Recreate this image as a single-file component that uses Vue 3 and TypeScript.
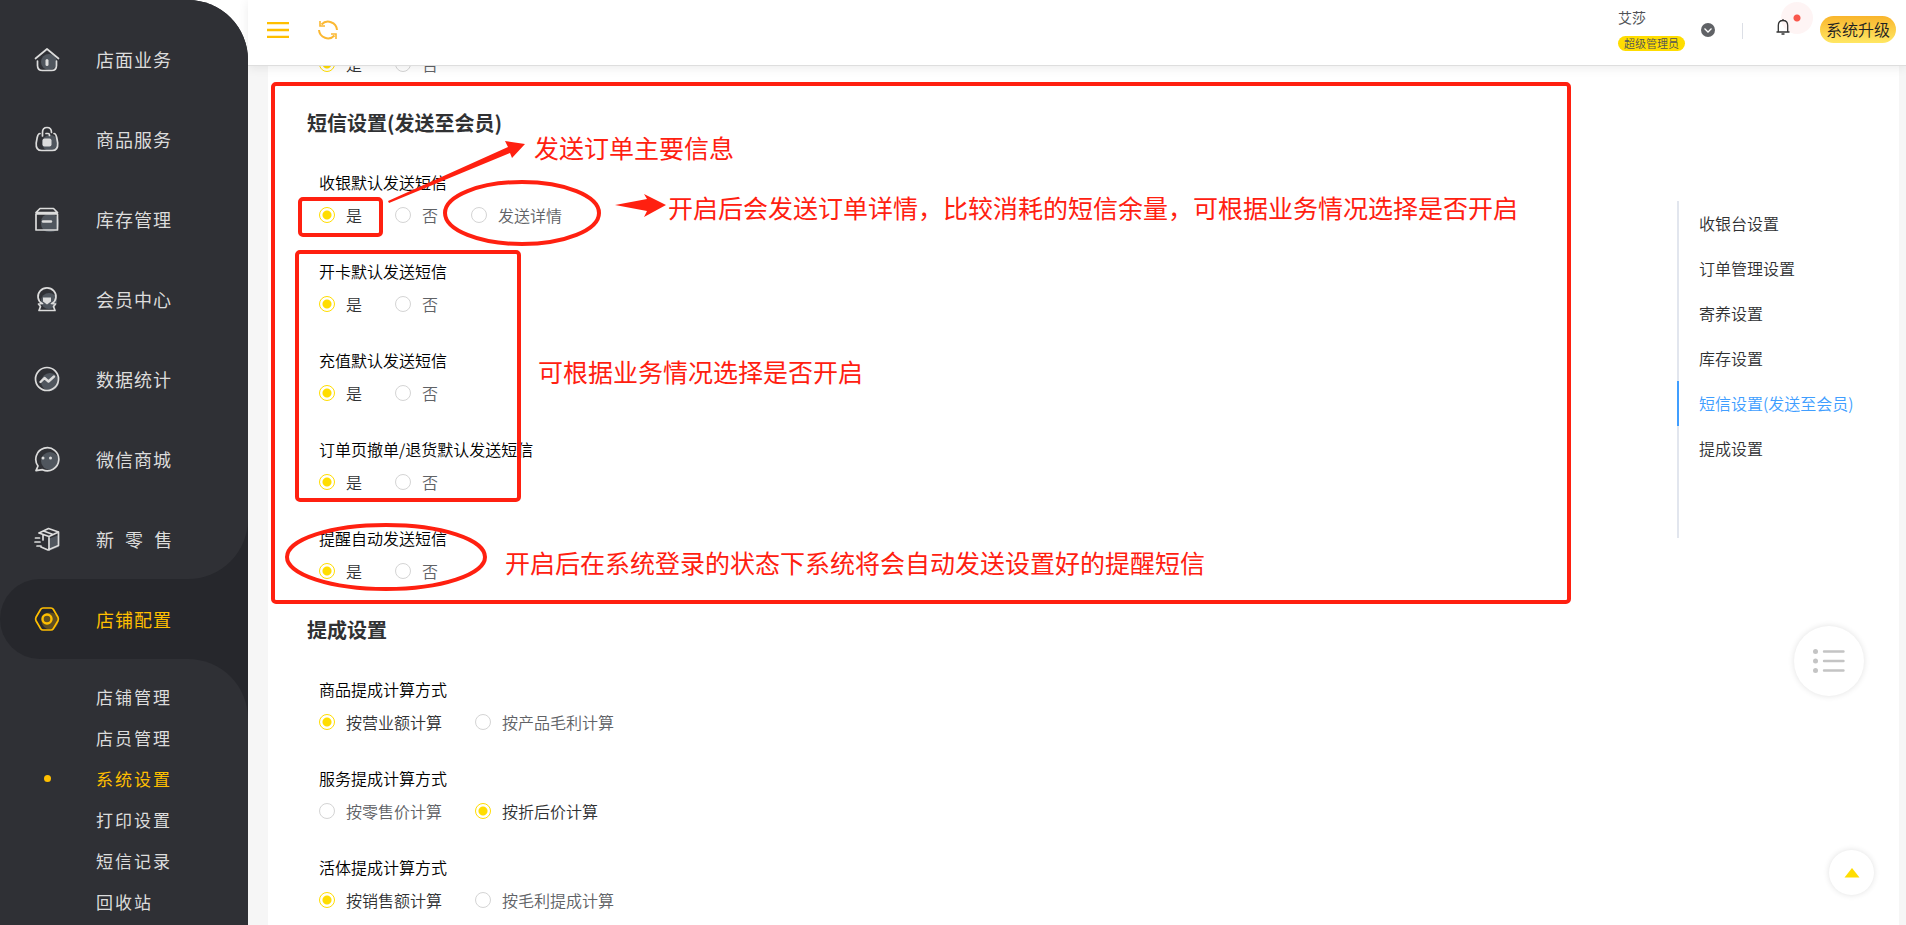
<script setup lang="ts">
import { ref } from 'vue'

interface NavItem { icon: string; label: string }
interface Choice { id: string; label: string; options: string[]; value: number }
interface Section { title: string; choices: Choice[] }

const navItems: NavItem[] = [
  { icon: 'home', label: '店面业务' },
  { icon: 'bag', label: '商品服务' },
  { icon: 'box', label: '库存管理' },
  { icon: 'member', label: '会员中心' },
  { icon: 'chart', label: '数据统计' },
  { icon: 'chat', label: '微信商城' },
  { icon: 'parcel', label: '新\u00a0\u00a0零\u00a0\u00a0售' },
]
const subItems: string[] = ['店铺管理', '店员管理', '系统设置', '打印设置', '短信记录', '回收站']
const activeSub = ref('系统设置')

const previous = ref(0)
const sections = ref<Section[]>([
  {
    title: '短信设置(发送至会员)',
    choices: [
      { id: 'cashier', label: '收银默认发送短信', options: ['是', '否', '发送详情'], value: 0 },
      { id: 'card', label: '开卡默认发送短信', options: ['是', '否'], value: 0 },
      { id: 'recharge', label: '充值默认发送短信', options: ['是', '否'], value: 0 },
      { id: 'refund', label: '订单页撤单/退货默认发送短信', options: ['是', '否'], value: 0 },
      { id: 'remind', label: '提醒自动发送短信', options: ['是', '否'], value: 0 },
    ],
  },
  {
    title: '提成设置',
    choices: [
      { id: 'goods', label: '商品提成计算方式', options: ['按营业额计算', '按产品毛利计算'], value: 0 },
      { id: 'service', label: '服务提成计算方式', options: ['按零售价计算', '按折后价计算'], value: 1 },
      { id: 'live', label: '活体提成计算方式', options: ['按销售额计算', '按毛利提成计算'], value: 0 },
    ],
  },
])

const anchors: string[] = ['收银台设置', '订单管理设置', '寄养设置', '库存设置', '短信设置(发送至会员)', '提成设置']
const activeAnchor = ref('短信设置(发送至会员)')
</script>

<template>
  <div class="layout">
    <aside class="sidebar">
      <nav class="nav-top">
        <a v-for="item in navItems" :key="item.icon" href="#" class="nav-row" @click.prevent>
          <svg class="nav-icon" viewBox="0 0 26 26" aria-hidden="true">
            <template v-if="item.icon === 'home'">
              <circle class="blob" cx="15" cy="16" r="8" />
              <path d="M1.500 12.500 L13 3 L24.500 12.500 M3.500 15 v4.500 q0 5 5 5 h9 q5 0 5-5 v-4.500" />
              <rect class="fill" x="11.500" y="13" width="3" height="7" rx="1.500" />
            </template>
            <template v-else-if="item.icon === 'bag'">
              <circle class="blob" cx="16" cy="17" r="8" />
              <path d="M8.500 10 V6.500 q0-5 4.500-5 t4.500 5 M12 7.500 h2 q1.500 0 1.500 2 M6 7.500 q-2 0-2.800 4 l-1 5.500 q-.6 7.500 5.500 7.500 h10.500 q6 0 5.500-7.500 l-1-5.500 q-.8-4-2.700-4" />
              <rect class="fill" x="8.500" y="12.500" width="9" height="8" rx="2" />
            </template>
            <template v-else-if="item.icon === 'box'">
              <rect class="blob" x="7" y="8" width="18" height="18" rx="8" />
              <path d="M2 8 h21.500 v16 h-21.500 z M2 6.500 l4-4 h13.500 l4 4 z" />
              <path class="thick" d="M9 15.500 h8" />
            </template>
            <template v-else-if="item.icon === 'member'">
              <circle class="blob" cx="15" cy="15" r="8" />
              <path d="M8 17.500 A9 8.500 0 1 1 18 17.500 M8.500 17.500 l-4 .5 l2 2.500 l-1.500 4 h16 l-1.500-4 l2-2.500 l-4-.5" />
              <path class="fill" d="M9 11.500 h8 v4 l-4 3 l-4-3 z" />
            </template>
            <template v-else-if="item.icon === 'chart'">
              <circle class="blob" cx="16" cy="16" r="9" />
              <circle cx="13" cy="13" r="11.500" />
              <path class="thick" d="M6.500 16 l4-4 l4 3.500 l5.500-5" />
            </template>
            <template v-else-if="item.icon === 'chat'">
              <circle class="blob" cx="16" cy="15" r="9" />
              <path d="M4 20 a11.500 11.500 0 1 1 4.500 3.700 l-6.500 1 z" />
              <circle class="fill" cx="9" cy="12" r="1.500" />
              <circle class="fill" cx="16.500" cy="12" r="1.500" />
            </template>
            <template v-else>
              <path class="blob" d="M14 13 l11-4 v12 l-10 4 z" />
              <path d="M5 7 l9.500-4.500 l10 3.500 v13.500 l-10.500 4.500 l-7-3 M5 7 l10 3.500 l9.500-4.500 M15 10.500 v13.500 M9.500 5 l9.500 3.500 M9 9 v5 M1.500 12 h4 M1 16 h5 M3 20 h4" />
            </template>
          </svg>
          <span>{{ item.label }}</span>
        </a>
      </nav>
      <div class="nav-active-wrap">
        <a href="#" class="nav-row nav-active" @click.prevent>
          <svg class="nav-icon" viewBox="0 0 26 26" aria-hidden="true">
            <circle class="blob" cx="16" cy="15" r="8.500" />
            <path d="M9 2 h8 q1.500 0 2.300 1.300 l4.700 8 q.8 1.700 0 3.400 l-4.700 8 q-.8 1.300-2.300 1.300 h-8 q-1.500 0-2.300-1.300 l-4.700-8 q-.8-1.700 0-3.400 l4.700-8 Q7.500 2 9 2 z" />
            <circle class="thick" cx="13" cy="13" r="4.500" />
          </svg>
          <span>店铺配置</span>
        </a>
      </div>
      <nav class="nav-sub">
        <a
          v-for="s in subItems"
          :key="s"
          href="#"
          class="sub-row"
          :class="{ current: s === activeSub }"
          @click.prevent="activeSub = s"
        ><i class="dot"></i><span>{{ s }}</span></a>
      </nav>
    </aside>

    <div class="page">
      <header class="header">
        <button class="icon-btn" aria-label="菜单">
          <svg width="22" height="16" viewBox="0 0 22 16"><path d="M0 1h22M0 8h22M0 15h22" stroke="#ffbf00" stroke-width="2.400" /></svg>
        </button>
        <button class="icon-btn" aria-label="刷新">
          <svg width="20" height="20" viewBox="0 0 20 20" fill="none" stroke="#fbb833" stroke-width="2">
            <path d="M3.500 4.500 A9 9 0 0 1 19 10 M16.500 15.500 A9 9 0 0 1 1 10" />
            <path d="M2 1 v5 h5 M18 19 v-5 h-5" stroke-width="1.600" />
          </svg>
        </button>
        <div class="spacer"></div>
        <div class="user">
          <span class="user-name">艾莎</span>
          <span class="user-role">超级管理员</span>
        </div>
        <button class="icon-btn chevron" aria-label="展开">
          <svg width="14" height="14" viewBox="0 0 14 14" fill="none"><circle cx="7" cy="7" r="7" fill="#606266" /><path d="M3.500 5.500 L7 9 l3.500-3.500" stroke="#fff" stroke-width="1.300" /></svg>
        </button>
        <span class="divider"></span>
        <button class="icon-btn bell" aria-label="通知">
          <span class="halo"></span>
          <svg width="14" height="16" viewBox="0 0 14 16" fill="none" stroke="#333" stroke-width="1.300">
            <path d="M.5 13 H13.500 M2.300 13 V6.500 Q2.300 1.500 7 1.500 T11.700 6.500 V13 M7 0 v1.500 M5.500 15 h3" />
          </svg>
        </button>
        <button class="upgrade">系统升级</button>
      </header>

      <main class="main">
        <div class="card">
          <form class="settings" @submit.prevent>
            <div class="options previous">
              <label class="option"><input v-model="previous" type="radio" name="previous" :value="0" /><span>是</span></label>
              <label class="option"><input v-model="previous" type="radio" name="previous" :value="1" /><span>否</span></label>
            </div>
            <section v-for="sec in sections" :key="sec.title">
              <h2>{{ sec.title }}</h2>
              <fieldset v-for="c in sec.choices" :key="c.id">
                <legend>{{ c.label }}</legend>
                <div class="options">
                  <label v-for="(o, i) in c.options" :key="o" class="option">
                    <input v-model="c.value" type="radio" :name="c.id" :value="i" /><span>{{ o }}</span>
                  </label>
                </div>
              </fieldset>
            </section>
          </form>
          <nav class="anchors">
            <a
              v-for="a in anchors"
              :key="a"
              href="#"
              :class="{ current: a === activeAnchor }"
              @click.prevent="activeAnchor = a"
            >{{ a }}</a>
          </nav>
        </div>

        <svg class="marks" width="1340" height="550" viewBox="248 66 1340 550">
          <g fill="none" stroke="#ff2010" stroke-width="4">
            <rect x="273" y="84" width="1296" height="518" rx="3" />
            <rect x="300" y="199" width="81" height="36" rx="3" />
            <rect x="297" y="252" width="222" height="248" rx="3" />
            <ellipse cx="522" cy="213" rx="77" ry="31" />
            <ellipse cx="386" cy="557" rx="99" ry="32" />
          </g>
          <g fill="#ff2010">
            <path d="M388 201 L508 147 L505 141 L525 144 L512 158 L510 153 L389 203 Z" />
            <path d="M615 205 L647 199 L644 194 L666 205 L644 217 L647 211 Z" />
          </g>
          <g class="notes">
            <text x="534" y="158">发送订单主要信息</text>
            <text x="668" y="218">开启后会发送订单详情，比较消耗的短信余量，可根据业务情况选择是否开启</text>
            <text x="538" y="382">可根据业务情况选择是否开启</text>
            <text x="505" y="573">开启后在系统登录的状态下系统将会自动发送设置好的提醒短信</text>
          </g>
        </svg>
      </main>
    </div>

    <button class="float list" aria-label="列表">
      <svg width="32" height="24" viewBox="0 0 32 24" stroke="#c4c4c4" fill="#c4c4c4">
        <g stroke="none"><circle cx="2.500" cy="2.500" r="2.500" /><circle cx="2.500" cy="12" r="2.500" /><circle cx="2.500" cy="21.500" r="2.500" /></g>
        <path d="M11 2.500 h19.500 M11 12 h19.500 M11 21.500 h19.500" stroke-width="2.400" stroke-linecap="round" />
      </svg>
    </button>
    <button class="float top" aria-label="回到顶部">
      <svg width="16" height="10" viewBox="0 0 16 10"><path d="M8 0 L15.500 9.500 H.5 Z" fill="#ffdd00" /></svg>
    </button>
  </div>
</template>

<style>
html,
body {
  margin: 0;
  background: #f6f6f6;
}
</style>

<style scoped>
.layout {
  display: flex;
  height: 100vh;
  overflow: hidden;
  background: #fff;
  font-family: 'Noto Sans CJK SC', 'Noto Sans', sans-serif;
  font-size: 16px;
  font-weight: 350;
  color: #303133;
}
a {
  color: inherit;
  text-decoration: none;
}
button {
  padding: 0;
  border: 0;
  background: none;
  font: inherit;
  color: inherit;
  cursor: pointer;
}

.sidebar {
  flex: 0 0 248px;
  display: flex;
  flex-direction: column;
  border-top-right-radius: 60px;
  background: #26272c;
  color: #dcdcdc;
  overflow: hidden;
  z-index: 3;
}
.nav-top {
  padding-top: 19px;
  background: #2f3035;
  border-bottom-right-radius: 60px;
}
.nav-row {
  display: flex;
  align-items: center;
  height: 80px;
  padding-left: 34px;
  gap: 36px;
  font-size: 18px;
  font-weight: 400;
  letter-spacing: 1px;
}
.nav-icon {
  width: 26px;
  height: 26px;
  fill: none;
  stroke: #dcdcdc;
  stroke-width: 1.700;
  stroke-linejoin: round;
  stroke-linecap: round;
}
.nav-icon .blob {
  fill: #50565e;
  stroke: none;
}
.nav-icon .fill {
  fill: #dcdcdc;
  stroke: none;
}
.nav-icon .thick {
  stroke-width: 2.400;
}
.nav-active-wrap {
  background: #2f3035;
}
.nav-active {
  border-radius: 40px 0 0 40px;
  background: #26272c;
  color: #ffbf00;
}
.nav-active .nav-icon {
  stroke: #ffbf00;
}
.nav-active .nav-icon .blob {
  fill: #5f4f22;
}
.nav-sub {
  flex: 1;
  padding-top: 17px;
  background: #2f3035;
  border-top-right-radius: 60px;
}
.sub-row {
  display: flex;
  align-items: center;
  height: 41px;
  padding-left: 44px;
  gap: 45px;
  font-size: 17px;
  font-weight: 400;
  letter-spacing: 2px;
}
.dot {
  width: 7px;
  height: 7px;
  border-radius: 50%;
}
.sub-row.current {
  color: #ffbf00;
}
.sub-row.current .dot {
  background: #ffbf00;
}

.page {
  flex: 1;
  min-width: 0;
  display: flex;
  flex-direction: column;
}
.header {
  flex: 0 0 65px;
  display: flex;
  align-items: flex-start;
  padding: 0 10px 0 19px;
  background: #fff;
  border-bottom: 1px solid #dedede;
  box-shadow: 0 2px 10px rgba(0, 0, 0, 0.08);
  z-index: 2;
}
.icon-btn {
  position: relative;
  display: flex;
  align-items: center;
  justify-content: center;
  height: 60px;
}
.icon-btn:first-child {
  margin-right: 29px;
}
.spacer {
  flex: 1;
}
.user {
  display: flex;
  flex-direction: column;
  align-items: flex-start;
  padding-top: 7px;
  color: #505256;
}
.user-name {
  font-size: 14px;
  line-height: 20px;
  font-weight: 400;
}
.user-role {
  margin-top: 9px;
  padding: 0 6px;
  border-radius: 8px;
  background: #ffdd00;
  font-size: 11px;
  line-height: 15px;
}
.chevron {
  margin-left: 16px;
}
.divider {
  width: 1px;
  height: 16px;
  margin: 23px 33px 0 27px;
  background: #dcdfe6;
}
.bell {
  height: 54px;
  margin-right: 30px;
}
.bell svg {
  position: relative;
}
.halo {
  position: absolute;
  left: 5px;
  top: 2px;
  width: 32px;
  height: 32px;
  border-radius: 50%;
  background: radial-gradient(circle, #f9574c 3px, #fef4f4 4px);
}
.upgrade {
  width: 76px;
  height: 27px;
  margin-top: 16px;
  border-radius: 14px;
  background: linear-gradient(#f9b52c, #ffe763);
  color: #222;
  line-height: 27px;
}

.main {
  position: relative;
  flex: 1;
  min-height: 0;
  padding: 0 7px 0 20px;
  background: #f6f6f6;
  overflow: hidden;
}
.card {
  display: flex;
  min-height: 100%;
  background: #fff;
}
.settings {
  flex: 1;
  padding-left: 39px;
}
h2 {
  margin: 0 0 32px;
  font-size: 20px;
  line-height: 30px;
  font-weight: 700;
}
fieldset {
  margin: 0 0 32px 12px;
  padding: 0;
  border: 0;
}
legend {
  padding: 0;
  margin-bottom: 9px;
  line-height: 24px;
  color: #000;
}
.options {
  display: flex;
  gap: 33px;
}
.previous {
  margin: -14px 0 32px 12px;
}
.option {
  display: flex;
  align-items: center;
  gap: 12px;
  line-height: 24px;
  color: #606266;
}
.option:has(input:checked) {
  color: #303133;
}
.option input {
  appearance: none;
  box-sizing: border-box;
  width: 16px;
  height: 16px;
  margin: 0 -1px 0 0;
  border: 1px solid #d4d4d4;
  border-radius: 50%;
  background: #fff;
}
.option input:checked {
  border-color: #ffdd00;
  background: radial-gradient(circle, #ffdd00 4px, #fff 5px);
}
.anchors {
  flex: 0 0 222px;
  align-self: flex-start;
  box-sizing: border-box;
  height: 337px;
  margin-top: 135px;
  box-shadow: inset 2px 0 #e2e6ee;
}
.anchors a {
  display: block;
  padding-left: 20px;
  border-left: 2px solid transparent;
  line-height: 45px;
}
.anchors a.current {
  border-color: #409eff;
  color: #409eff;
}
.marks {
  position: absolute;
  left: 0;
  top: 0;
  pointer-events: none;
}
.notes {
  fill: #ff2010;
  font-size: 25px;
  font-weight: 400;
}

.float {
  position: fixed;
  z-index: 4;
  display: flex;
  align-items: center;
  justify-content: center;
  border-radius: 50%;
  background: #fff;
  box-shadow: 0 0 6px rgba(0, 0, 0, 0.12);
}
.list {
  right: 42px;
  bottom: 229px;
  width: 70px;
  height: 70px;
}
.top {
  right: 32px;
  bottom: 30px;
  width: 45px;
  height: 45px;
}
</style>
